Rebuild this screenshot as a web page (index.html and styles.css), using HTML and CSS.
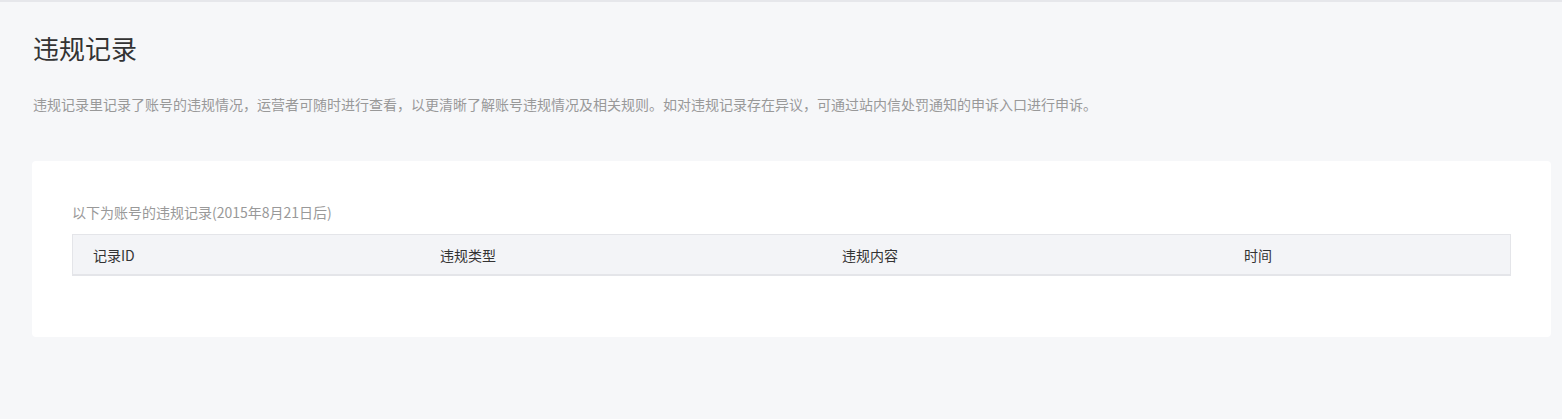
FILE: index.html
```html
<!DOCTYPE html>
<html lang="zh-CN">
<head>
  <meta charset="UTF-8">
  <title>违规记录</title>
  <link rel="stylesheet" href="styles.css">
</head>
<body>

<div class="page">
  <h2 class="title">违规记录</h2>
  <p class="desc">违规记录里记录了账号的违规情况，运营者可随时进行查看，以更清晰了解账号违规情况及相关规则。如对违规记录存在异议，可通过站内信处罚通知的申诉入口进行申诉。</p>

  <div class="card">
    <div class="label">以下为账号的违规记录(2015年8月21日后)</div>
    <table>
      <thead>
        <tr>
          <th class="c1">记录ID</th>
          <th class="c2">违规类型</th>
          <th class="c3">违规内容</th>
          <th class="c4">时间</th>
        </tr>
      </thead>
      <tbody></tbody>
    </table>
  </div>
</div>

</body>
</html>
```

FILE: styles.css
```css
html, body {
  margin: 0;
  height: 100%;
}

body {
  background: #f6f7f9;
  border-top: 2px solid #e6e7eb;
  box-sizing: border-box;
  font-family: "Noto Sans CJK SC", "Microsoft YaHei", sans-serif;
  color: #333;
}

.page {
  padding: 28px 11px 0 32px;
}

.title {
  margin: 0 0 0 1px;
  font-size: 26px;
  line-height: 36px;
  font-weight: normal;
  color: #333;
}

.desc {
  margin: 28px 0 0 1px;
  font-size: 14px;
  line-height: 20px;
  color: #999;
}

.card {
  margin-top: 47px;
  background: #fff;
  border-radius: 4px;
  padding: 41px 40px 61px;
}

.label {
  font-size: 14px;
  line-height: 20px;
  color: #999;
}

table {
  width: 100%;
  margin-top: 12px;
  border-collapse: collapse;
  table-layout: fixed;
}

th {
  height: 39px;
  padding: 0 20px;
  background: #f3f4f7;
  border: 1px solid #e4e5e9;
  border-bottom-width: 2px;
  border-left: none;
  border-right: none;
  text-align: left;
  font-size: 14px;
  font-weight: normal;
  color: #333;
}

th.c1 {
  width: 307px;
  border-left: 1px solid #e4e5e9;
}

th.c2,
th.c3 {
  width: 362px;
}

th.c4 {
  border-right: 1px solid #e4e5e9;
}
```
